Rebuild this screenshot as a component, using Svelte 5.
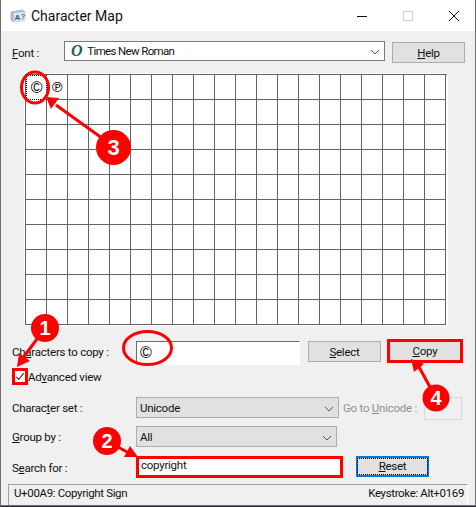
<script>
  const cells = Array.from({ length: 200 }, (_, i) => i);
</script>

<div class="window">
  <header class="titlebar">
    <svg class="app-icon" width="16" height="14" viewBox="0 0 16 14">
      <path d="M1 3 L12 1 L15 3 L15 11 L4 13 L1 11 Z" fill="#a9c4dc" stroke="#8a9cb0" stroke-width="0.6" />
      <path d="M4 4 L15 3 L15 11 L4 13 Z" fill="#dbe7f2" />
      <text x="4.5" y="11" class="icon-a">A</text>
      <text x="10.5" y="10" class="icon-q">?</text>
    </svg>
    <span class="title">Character Map</span>
    <div class="controls">
      <svg width="12" height="12" viewBox="0 0 12 12"><path d="M1 6.5 H11" stroke="#111" stroke-width="1" /></svg>
      <svg width="12" height="12" viewBox="0 0 12 12"><rect x="1.5" y="1.5" width="9" height="9" fill="none" stroke="#ccc" /></svg>
      <svg width="12" height="12" viewBox="0 0 12 12"><path d="M1 1 L11 11 M11 1 L1 11" stroke="#111" stroke-width="1" /></svg>
    </div>
  </header>

  <main class="content">
    <div class="row font-row">
      <span class="label font-label"><u>F</u>ont :</span>
      <div class="combo font-combo">
        <span class="o-glyph">O</span>
        <span class="font-name">Times New Roman</span>
        <svg class="chev" width="10" height="6" viewBox="0 0 10 6"><path d="M1 1 L5 5 L9 1" fill="none" stroke="#555" /></svg>
      </div>
      <button class="btn help"><u>H</u>elp</button>
    </div>

    <div class="grid">
      {#each cells as i}
        <div class="cell" class:selected={i === 0}>
          {#if i === 0}©{:else if i === 1}<span class="phono">℗</span>{/if}
        </div>
      {/each}
    </div>

    <div class="row copy-row">
      <span class="label chars-label">Ch<u>a</u>racters to copy :</span>
      <div class="chars-input">©</div>
      <button class="btn select"><u>S</u>elect</button>
      <button class="btn copy"><u>C</u>opy</button>
    </div>

    <div class="row adv-row">
      <span class="checkbox">
        <svg width="12" height="11" viewBox="0 0 12 11"><path d="M1.5 6 L4.5 9 L10.5 1.5" fill="none" stroke="#333" stroke-width="1.3" /></svg>
      </span>
      <span class="label adv-label">Ad<u>v</u>anced view</span>
    </div>

    <div class="row set-row">
      <span class="label form-label">Charac<u>t</u>er set :</span>
      <div class="combo gray set-combo">
        <span>Unicode</span>
        <svg class="chev" width="10" height="6" viewBox="0 0 10 6"><path d="M1 1 L5 5 L9 1" fill="none" stroke="#555" /></svg>
      </div>
      <span class="label goto">Go to <u>U</u>nicode :</span>
      <div class="goto-input"></div>
    </div>

    <div class="row group-row">
      <span class="label form-label"><u>G</u>roup by :</span>
      <div class="combo gray group-combo">
        <span>All</span>
        <svg class="chev" width="10" height="6" viewBox="0 0 10 6"><path d="M1 1 L5 5 L9 1" fill="none" stroke="#555" /></svg>
      </div>
    </div>

    <div class="row search-row">
      <span class="label form-label search-label">S<u>e</u>arch for :</span>
      <div class="search-input">copyright</div>
      <button class="btn reset"><span class="focus-ring"><u>R</u>eset</span></button>
    </div>

    <footer class="status">
      <span>U+00A9: Copyright Sign</span>
      <span>Keystroke: Alt+0169</span>
    </footer>
  </main>

  <svg class="marks" width="476" height="507" viewBox="0 0 476 507">
    <ellipse cx="35" cy="87.5" rx="13.5" ry="15.5" class="ring" />
    <ellipse cx="147.5" cy="348" rx="24" ry="16.5" class="ring" />

    <path d="M113 146 L56 105" class="shaft" />
    <path d="M46 97 L59 98 L51 109 Z" class="head" />
    <circle cx="113.5" cy="147.5" r="17.5" class="badge" />
    <text x="113.5" y="155" class="num big">3</text>

    <path d="M45 328 L23 358" class="shaft" />
    <path d="M17 367 L19 353 L30 361 Z" class="head" />
    <circle cx="45" cy="328" r="14" class="badge" />
    <text x="45" y="335" class="num">1</text>

    <path d="M107 441 L127 452" class="shaft" />
    <path d="M138 457 L124 457 L130 446 Z" class="head" />
    <circle cx="107" cy="441" r="14" class="badge" />
    <text x="107" y="448" class="num">2</text>

    <path d="M436 398 L419 367" class="shaft" />
    <path d="M411 359 L424 364 L414 372 Z" class="head" />
    <circle cx="436" cy="398" r="13.5" class="badge" />
    <text x="436" y="405" class="num">4</text>
  </svg>
</div>

<style>
  :global(body) {
    margin: 0;
    background: #26303a;
  }

  .window {
    position: relative;
    box-sizing: border-box;
    width: 476px;
    height: 506px;
    background: #f0f0f0;
    border: 1px solid #6f6f6f;
    border-top: 0;
    font-family: Roboto, "Noto Sans", sans-serif;
    font-size: 11.5px;
    letter-spacing: -0.25px;
    color: #111;
    overflow: hidden;
  }

  .titlebar {
    display: flex;
    align-items: center;
    height: 31px;
    background: #fff;
    padding-left: 9px;
  }
  .app-icon {
    margin-right: 5px;
  }
  .icon-a,
  .icon-q {
    font-family: "Liberation Sans", sans-serif;
    font-size: 8px;
    font-weight: 700;
  }
  .icon-a {
    fill: #32557f;
  }
  .icon-q {
    fill: #3c8a4a;
  }
  .title {
    font-size: 14px;
    letter-spacing: 0;
  }
  .controls {
    display: flex;
    gap: 34px;
    margin-left: auto;
    margin-right: 15px;
  }

  .content {
    padding-left: 11px;
  }
  .row {
    display: flex;
    align-items: flex-start;
  }
  .label {
    white-space: nowrap;
    line-height: 17px;
  }
  u {
    text-underline-offset: 1px;
  }

  .font-row {
    margin-top: 10px;
    height: 22px;
  }
  .font-label {
    width: 52px;
    margin-top: 4px;
  }
  .combo {
    display: flex;
    align-items: center;
    box-sizing: border-box;
    position: relative;
    border: 1px solid #7a7a7a;
    background: #fff;
  }
  .font-combo {
    width: 321px;
    height: 20px;
    padding-left: 6px;
    gap: 5px;
  }
  .font-name {
    letter-spacing: -0.65px;
  }
  .o-glyph {
    font-family: "Liberation Serif", serif;
    font-style: italic;
    font-weight: 700;
    font-size: 16px;
    line-height: 16px;
    color: #14615f;
  }
  .chev {
    position: absolute;
    right: 4px;
    top: 50%;
    margin-top: -2px;
  }
  .gray {
    background: #e1e1e1;
    border-color: #adadad;
    height: 21px;
    padding-left: 3px;
  }

  .btn {
    box-sizing: border-box;
    height: 21px;
    width: 73px;
    padding: 0;
    background: #e1e1e1;
    border: 1px solid #adadad;
    font: inherit;
    letter-spacing: inherit;
    color: inherit;
  }
  .help {
    margin-left: 7px;
    margin-top: 1px;
  }

  .grid {
    display: grid;
    grid-template-columns: repeat(20, 21px);
    grid-auto-rows: 25px;
    width: 421px;
    margin: 11px 0 0 13px;
    background: #fff;
    border-left: 1px solid #646464;
    border-top: 1px solid #646464;
    outline: 1px solid #fff;
  }
  .cell {
    box-sizing: border-box;
    display: flex;
    align-items: center;
    justify-content: center;
    border-right: 1px solid #646464;
    border-bottom: 1px solid #646464;
    font-family: "Liberation Sans", sans-serif;
    font-size: 16px;
    color: #000;
  }
  .selected {
    border: 1px dotted #000;
  }
  .phono {
    font-family: "DejaVu Sans", sans-serif;
    font-size: 14px;
    color: #000;
  }

  .copy-row {
    margin-top: 14px;
    height: 26px;
  }
  .chars-label {
    width: 124px;
    margin-top: 5px;
  }
  .chars-input {
    box-sizing: border-box;
    width: 164px;
    height: 24px;
    margin-top: 2px;
    padding-left: 3px;
    background: #fff;
    border: 1px solid #fff;
    border-top-color: #6d6d6d;
    border-left-color: #6d6d6d;
    font-family: "Liberation Sans", sans-serif;
    font-size: 16px;
    line-height: 22px;
    color: #000;
  }
  .select {
    margin: 2px 0 0 8px;
  }
  .copy {
    width: 76px;
    height: 24px;
    margin-left: 6px;
    border: 3px solid #fe0000;
  }

  .adv-row {
    margin-top: 3px;
    height: 17px;
  }
  .adv-label {
    margin-top: 1px;
  }
  .checkbox {
    box-sizing: border-box;
    display: flex;
    align-items: center;
    justify-content: center;
    width: 16px;
    height: 17px;
    background: #fff;
    border: 3px solid #fe0000;
  }

  .set-row {
    margin-top: 12px;
    height: 23px;
  }
  .form-label {
    width: 124px;
    margin-top: 3px;
  }
  .search-label {
    margin-top: 4px;
  }
  .set-combo {
    width: 203px;
  }
  .goto {
    width: 81px;
    margin: 3px 0 0 4px;
    color: #8f8f8f;
  }
  .goto-input {
    box-sizing: border-box;
    width: 38px;
    height: 23px;
    border: 1px solid #d9d9d9;
  }

  .group-row {
    margin-top: 6px;
    height: 20px;
  }
  .group-combo {
    width: 201px;
  }

  .search-row {
    margin-top: 10px;
    height: 22px;
  }
  .search-input {
    box-sizing: border-box;
    width: 207px;
    height: 22px;
    padding-left: 2px;
    background: #fff;
    border: 3px solid #fe0000;
    line-height: 12px;
  }
  .reset {
    margin-left: 13px;
    border: 2px solid #0078d7;
  }
  .focus-ring {
    display: block;
    margin: 0;
    line-height: 15px;
    outline: 1px dotted #000;
  }

  .status {
    box-sizing: border-box;
    display: flex;
    justify-content: space-between;
    align-items: center;
    width: 460px;
    height: 21px;
    margin: 6px 0 0 -4px;
    padding: 0 3px 5px 5px;
    letter-spacing: -0.35px;
    border-top: 1px solid #a0a0a0;
    border-left: 1px solid #a0a0a0;
    border-right: 1px solid #fff;
  }

  .marks {
    position: absolute;
    left: -1px;
    top: 0;
    pointer-events: none;
  }
  .ring {
    fill: none;
    stroke: #fe0000;
    stroke-width: 3;
  }
  .shaft {
    fill: none;
    stroke: #fe0000;
    stroke-width: 3;
  }
  .head,
  .badge {
    fill: #fe0000;
  }
  .num {
    fill: #fff;
    font-family: "Liberation Sans", sans-serif;
    font-weight: 700;
    font-size: 20px;
    letter-spacing: 0;
    text-anchor: middle;
  }
  .big {
    font-size: 22px;
  }
</style>
